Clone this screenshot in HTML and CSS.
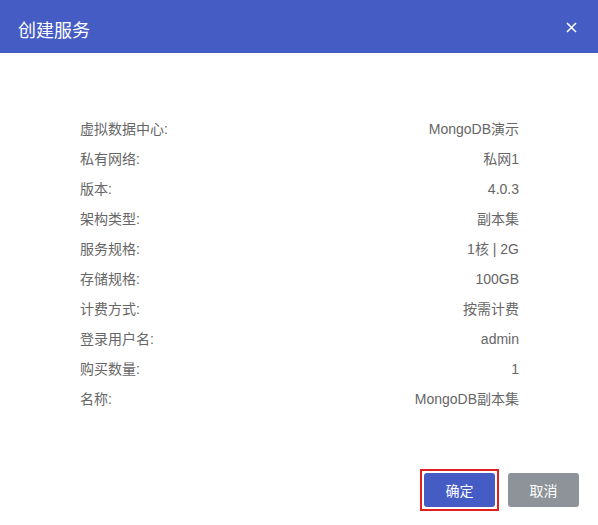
FILE: index.html
```html
<!DOCTYPE html>
<html lang="zh">
<head>
<meta charset="utf-8">
<link rel="stylesheet" href="styles.css">
</head>
<body>
<div class="dialog">
  <div class="header">
    <span class="title">创建服务</span>
    <span class="close"><svg width="11" height="11" viewBox="0 0 11 11"><path d="M1 1L10 10M10 1L1 10" stroke="#fff" stroke-width="1.6"/></svg></span>
  </div>
  <div class="body">
    <div class="row"><span>虚拟数据中心:</span><span>MongoDB演示</span></div>
    <div class="row"><span>私有网络:</span><span>私网1</span></div>
    <div class="row"><span>版本:</span><span>4.0.3</span></div>
    <div class="row"><span>架构类型:</span><span>副本集</span></div>
    <div class="row"><span>服务规格:</span><span>1核 | 2G</span></div>
    <div class="row"><span>存储规格:</span><span>100GB</span></div>
    <div class="row"><span>计费方式:</span><span>按需计费</span></div>
    <div class="row"><span>登录用户名:</span><span>admin</span></div>
    <div class="row"><span>购买数量:</span><span>1</span></div>
    <div class="row"><span>名称:</span><span>MongoDB副本集</span></div>
  </div>
  <div class="footer">
    <span class="highlight"><button class="btn btn-primary">确定</button></span>
    <button class="btn btn-cancel">取消</button>
  </div>
</div>
</body>
</html>
```
FILE: styles.css
```css
* { box-sizing: border-box; }
html, body { margin: 0; padding: 0; background: #fff; }
body { font-family: "Liberation Sans", Arial, "Noto Sans CJK SC", sans-serif; }
.dialog { width: 598px; height: 525px; display: flex; flex-direction: column; }
.header {
  height: 53px; background: #445cc4; color: #fff;
  display: flex; align-items: center; justify-content: space-between;
  padding: 0 21px 0 18px;
}
.title { font-size: 18px; padding-top: 4px; }
.close { display: flex; padding-top: 2px; }
.body { padding: 61px 79px 0 80px; }
.row {
  display: flex; justify-content: space-between;
  height: 30px; line-height: 30px; font-size: 14px; color: #666;
}
.footer { display: flex; align-items: center; gap: 9px; padding: 55px 19px 0 0; justify-content: flex-end; }
.highlight { display: flex; border: 2px solid #e0201f; padding: 2px; }
.btn {
  width: 71px; height: 34px; border: none; border-radius: 3px;
  color: #fff; font-size: 14px; font-family: inherit; padding: 0;
}
.btn-primary { background: #445cc4; }
.btn-cancel { background: #8e9299; }
```
